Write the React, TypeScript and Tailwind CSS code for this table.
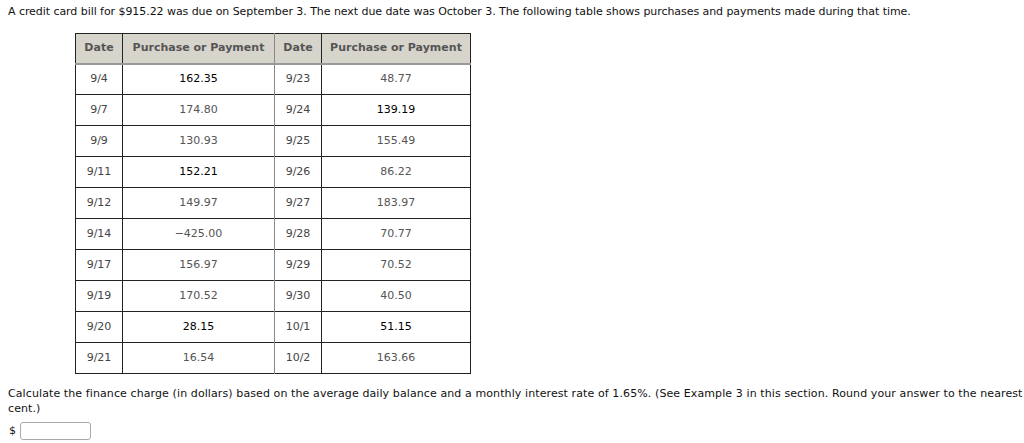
import React from "react";

const rows: [string, string, boolean, string, string, boolean][] = [
  ["9/4", "162.35", true, "9/23", "48.77", false],
  ["9/7", "174.80", false, "9/24", "139.19", true],
  ["9/9", "130.93", false, "9/25", "155.49", false],
  ["9/11", "152.21", true, "9/26", "86.22", false],
  ["9/12", "149.97", false, "9/27", "183.97", false],
  ["9/14", "\u2212425.00", false, "9/28", "70.77", false],
  ["9/17", "156.97", false, "9/29", "70.52", false],
  ["9/19", "170.52", false, "9/30", "40.50", false],
  ["9/20", "28.15", true, "10/1", "51.15", true],
  ["9/21", "16.54", false, "10/2", "163.66", false],
];

export default function App() {
  return (
    <div className="w-[1024px] h-[443px] bg-white text-[11px] text-[#111] overflow-hidden" style={{ fontFamily: '"DejaVu Sans", Verdana, sans-serif' }}>
      <div className="pl-[8px] pt-[4px] leading-[16px] tracking-[-0.06px]">
        A credit card bill for $915.22 was due on September 3. The next due date was October 3. The following table shows purchases and payments made during that time.
      </div>
      <div className="pl-[75px] pt-[13px]">
        <table className="border-collapse border border-[#222] text-[11px]">
          <thead>
            <tr className="bg-[#d7d4cc] text-[#555] font-bold h-[30px]">
              <th className="w-[47px] border-r border-[#222] border-b-2 border-b-[#999] font-bold">Date</th>
              <th className="w-[152px] border-r border-[#888] border-b-2 border-b-[#999] font-bold">Purchase or Payment</th>
              <th className="w-[47px] border-r border-[#222] border-b-2 border-b-[#999] font-bold">Date</th>
              <th className="w-[149px] border-b-2 border-b-[#999] font-bold">Purchase or Payment</th>
            </tr>
          </thead>
          <tbody>
            {rows.map((r, i) => (
              <tr key={i} className="h-[31px] border-b border-[#222] text-center">
                <td className="border-r border-[#222] text-[#444]">{r[0]}</td>
                <td className={"border-r border-[#888] " + (r[2] ? "text-black" : "text-[#555]")}>{r[1]}</td>
                <td className="border-r border-[#222] text-[#444]">{r[3]}</td>
                <td className={r[5] ? "text-black" : "text-[#555]"}>{r[4]}</td>
              </tr>
            ))}
          </tbody>
        </table>
      </div>
      <div className="pl-[8px] pt-[12px] leading-[15px] tracking-[0.1px]">
        Calculate the finance charge (in dollars) based on the average daily balance and a monthly interest rate of 1.65%. (See Example 3 in this section. Round your answer to the nearest cent.)
      </div>
      <div className="pl-[9px] pt-[6px] flex items-center gap-[4px]">
        <span>$</span>
        <input className="w-[71px] h-[18px] border border-[#aaa] rounded-[3px] outline-none" />
      </div>
    </div>
  );
}
